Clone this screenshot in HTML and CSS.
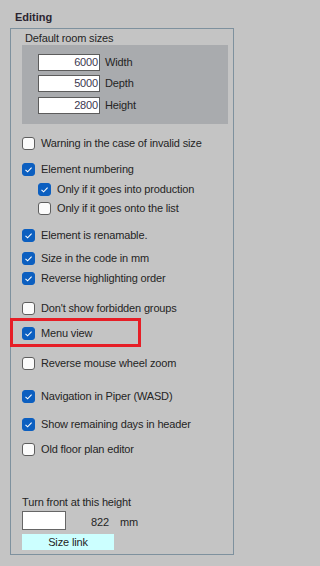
FILE: index.html
```html
<!DOCTYPE html>
<html>
<head>
<meta charset="utf-8">
<link rel="stylesheet" href="styles.css">
</head>
<body>
<div class="page">
  <div class="title">Editing</div>
  <div class="group">
    <div class="caption">Default room sizes</div>
    <div class="panel">
      <div class="size-row"><div class="num">6000</div><span class="lbl">Width</span></div>
      <div class="size-row"><div class="num">5000</div><span class="lbl">Depth</span></div>
      <div class="size-row r3"><div class="num">2800</div><span class="lbl">Height</span></div>
    </div>
    <div class="list">
      <div class="row m13"><span class="cb"></span><span>Warning in the case of invalid size</span></div>
      <div class="row m13b"><span class="cb on"><svg viewBox="0 0 13 13"><polyline points="3.5,6.8 5.6,8.8 9.6,4.6"/></svg></span><span>Element numbering</span></div>
      <div class="row sub m7"><span class="cb on"><svg viewBox="0 0 13 13"><polyline points="3.5,6.8 5.6,8.8 9.6,4.6"/></svg></span><span>Only if it goes into production</span></div>
      <div class="row sub m6"><span class="cb"></span><span>Only if it goes onto the list</span></div>
      <div class="row m14"><span class="cb on"><svg viewBox="0 0 13 13"><polyline points="3.5,6.8 5.6,8.8 9.6,4.6"/></svg></span><span>Element is renamable.</span></div>
      <div class="row m10"><span class="cb on"><svg viewBox="0 0 13 13"><polyline points="3.5,6.8 5.6,8.8 9.6,4.6"/></svg></span><span>Size in the code in mm</span></div>
      <div class="row m7"><span class="cb on"><svg viewBox="0 0 13 13"><polyline points="3.5,6.8 5.6,8.8 9.6,4.6"/></svg></span><span>Reverse highlighting order</span></div>
      <div class="row m17"><span class="cb"></span><span>Don't show forbidden groups</span></div>
      <div class="row m12 marked"><span class="cb on"><svg viewBox="0 0 13 13"><polyline points="3.5,6.8 5.6,8.8 9.6,4.6"/></svg></span><span>Menu view</span><span class="redbox"></span></div>
      <div class="row m17"><span class="cb"></span><span>Reverse mouse wheel zoom</span></div>
      <div class="row m20"><span class="cb on"><svg viewBox="0 0 13 13"><polyline points="3.5,6.8 5.6,8.8 9.6,4.6"/></svg></span><span>Navigation in Piper (WASD)</span></div>
      <div class="row m15"><span class="cb on"><svg viewBox="0 0 13 13"><polyline points="3.5,6.8 5.6,8.8 9.6,4.6"/></svg></span><span>Show remaining days in header</span></div>
      <div class="row m12"><span class="cb"></span><span>Old floor plan editor</span></div>
    </div>
    <div class="turn">Turn front at this height</div>
    <div class="height-row">
      <div class="box"></div>
      <span class="val">822</span>
      <span class="unit">mm</span>
    </div>
    <div class="link">Size link</div>
  </div>
</div>
</body>
</html>
```

FILE: styles.css
```css
html, body {
  margin: 0;
  padding: 0;
  background: #c4c4c4;
}
body {
  font-family: "Liberation Sans", Arial, sans-serif;
  font-size: 11px;
  letter-spacing: -0.15px;
  color: #242424;
  line-height: 13px;
}
.page {
  width: 242px;
  height: 566px;
  padding-top: 11px;
  box-sizing: border-box;
}
.title {
  margin-left: 15px;
  font-weight: bold;
  color: #2b2430;
  letter-spacing: 0;
}
.group {
  margin: 4px 0 0 10px;
  width: 224px;
  box-sizing: border-box;
  border: 1px solid #7e919e;
  padding: 3px 0 4px 11px;
}
.caption {
  margin-left: 3px;
}
.panel {
  width: 206px;
  height: 79px;
  box-sizing: border-box;
  background: #a9abae;
  padding: 9px 0 0 16px;
  display: flex;
  flex-direction: column;
  gap: 4px;
}
.size-row {
  display: flex;
  align-items: center;
  gap: 5px;
}
.size-row.r3 {
  margin-top: 1px;
}
.num {
  width: 62px;
  height: 17px;
  box-sizing: border-box;
  background: #fff;
  border: 1px solid #5c5c5c;
  text-align: right;
  padding-right: 1px;
  line-height: 15px;
  color: #3c3850;
}
.list {
  display: flex;
  flex-direction: column;
}
.row {
  display: flex;
  align-items: center;
  gap: 6px;
  height: 13px;
  position: relative;
}
.row.sub {
  margin-left: 16px;
}
.m6 { margin-top: 6px; }
.m7 { margin-top: 7px; }
.m10 { margin-top: 10px; }
.m12 { margin-top: 12px; }
.m13 { margin-top: 13px; }
.m13b { margin-top: 13px; }
.m14 { margin-top: 14px; }
.m15 { margin-top: 15px; }
.m17 { margin-top: 17px; }
.m20 { margin-top: 20px; }
.cb {
  width: 13px;
  height: 13px;
  box-sizing: border-box;
  border-radius: 3px;
  border: 1px solid #5e5e5e;
  background: #fbfbfb;
  flex: none;
  display: block;
}
.cb.on {
  background: #0c5fc0;
  border-color: #0c5fc0;
}
.cb svg {
  display: block;
  width: 13px;
  height: 13px;
  margin: -1px;
  fill: none;
  stroke: #ffffff;
  stroke-width: 1.1;
}
.redbox {
  position: absolute;
  left: -12px;
  top: -9px;
  width: 131px;
  height: 29px;
  box-sizing: border-box;
  border: 3px solid #e61e26;
}
.turn {
  margin-top: 40px;
}
.height-row {
  margin-top: 2px;
  display: flex;
  align-items: center;
  height: 19px;
}
.box {
  width: 44px;
  height: 19px;
  box-sizing: border-box;
  background: #fff;
  border: 1px solid #666;
}
.val {
  margin-left: 25px;
  margin-top: 3px;
}
.unit {
  margin-left: 11px;
  margin-top: 3px;
}
.link {
  margin-top: 4px;
  width: 92px;
  height: 16px;
  background: #ccffff;
  text-align: center;
  line-height: 16px;
}
```
